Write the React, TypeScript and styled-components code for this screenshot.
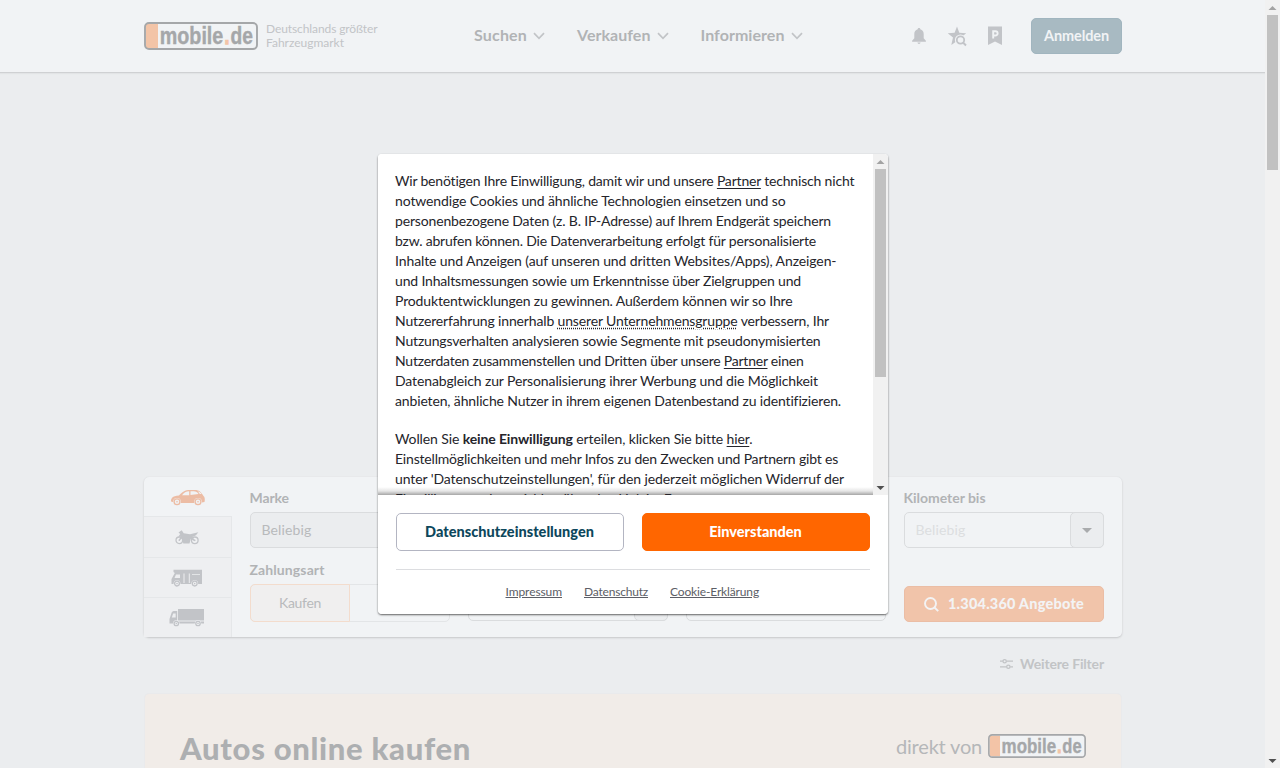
import React, { useLayoutEffect, useRef, useState } from "react";
import styled, { createGlobalStyle } from "styled-components";

const Global = createGlobalStyle`
  * { box-sizing: border-box; }
  html, body, #root { height: 100%; }
  body { margin: 0; overflow: hidden; background: #ebedef; font-family: Lato, "Open Sans", sans-serif; color: #acaeb1; }
  a { color: inherit; text-underline-offset: 2px; }
`;

const Measured = styled.span`
  display: inline-block;
  flex: none;
  white-space: nowrap;
`;

/* Tracks its text so that the line takes exactly the given measure. */
function Fit({ w, children }: { w: number; children: React.ReactNode }) {
  const ref = useRef<HTMLSpanElement>(null);
  const [spacing, setSpacing] = useState(0);
  useLayoutEffect(() => {
    const el = ref.current;
    if (!el) return;
    el.style.letterSpacing = "0px";
    const natural = el.getBoundingClientRect().width;
    const next = (w - natural) / (el.textContent || " ").length;
    el.style.letterSpacing = `${next}px`;
    setSpacing(next);
  }, [w]);
  return <Measured ref={ref} style={{ letterSpacing: `${spacing}px` }}>{children}</Measured>;
}

const Window = styled.div`
  display: flex;
  width: 1280px;
  height: 768px;
  overflow: hidden;
`;
const Page = styled.div`
  width: 1265px;
  height: 768px;
  overflow: hidden;
`;
const Header = styled.header`
  height: 73px;
  background: #f1f3f5;
  border-bottom: 1px solid #cfd1d3;
  box-shadow: 0 1px 1px #e2e4e6;
`;
const HeaderInner = styled.div`
  display: flex;
  align-items: center;
  width: 978px;
  height: 72px;
  margin-left: 144px;
`;
const Tagline = styled.div`
  width: 112px;
  margin-left: 8px;
  font-size: 12px;
  line-height: 14px;
  color: #c2c4c7;
`;
const Nav = styled.nav`
  display: flex;
  gap: 32px;
  width: 330px;
  margin-left: 96px;
  padding-bottom: 3px;
  font-size: 16px;
  font-weight: 700;
  color: #b1b3b5;
`;
const NavItem = styled.div`
  display: flex;
  align-items: center;
  gap: 6px;
  svg { margin-top: 3px; }
`;
const HeaderIcons = styled.div`
  display: flex;
  align-items: center;
  gap: 14px;
  margin-left: 103px;
`;
const Login = styled.button`
  display: flex;
  align-items: center;
  justify-content: center;
  width: 91px;
  height: 36px;
  margin-left: auto;
  padding: 0 0 2px;
  border: 1px solid #a1b5bf;
  border-radius: 5px;
  background: #a8bac2;
  color: #f1f3f5;
  font: 700 14.5px Lato, sans-serif;
`;
const Main = styled.main`
  width: 978px;
  margin: 404px 0 0 144px;
`;
const SearchPanel = styled.section`
  display: flex;
  height: 160px;
  border-radius: 5px;
  background: #f1f3f5;
  box-shadow: 0 1px 2px #c6c8ca, 0 0 1px #d9dbdd;
`;
const Tabs = styled.div`
  width: 88px;
  display: grid;
  grid-template-rows: 39px 41px 40px 40px;
`;
const Tab = styled.div<{ $active?: boolean }>`
  display: flex;
  align-items: center;
  justify-content: center;
  padding-right: ${(p) => (p.$active ? "0" : "2px")};
  color: ${(p) => (p.$active ? "#ecbca4" : "#c2c4c8")};
  background: ${(p) => (p.$active ? "transparent" : "#eeeff1")};
  border-top: ${(p) => (p.$active ? "0" : "1px solid #e5e7e9")};
  border-right: ${(p) => (p.$active ? "0" : "1px solid #e5e7e9")};
`;
const Form = styled.div`
  display: grid;
  grid-template-columns: repeat(4, 200px);
  grid-template-rows: 72px 74px;
  column-gap: 18px;
  padding: 12px 18px;
`;
const Cell = styled.div`
  display: flex;
  flex-direction: column;
`;
const Label = styled.label<{ $tall?: boolean }>`
  height: ${(p) => (p.$tall ? 24 : 23)}px;
  margin-left: -0.5px;
  line-height: 18px;
  font-size: 14px;
  font-weight: 700;
  color: #b1b3b5;
`;
const Field = styled.div<{ $filled?: boolean }>`
  display: flex;
  align-items: center;
  justify-content: space-between;
  height: 36px;
  padding: 0 0 1px 10.5px;
  border: 1px solid #dadcde;
  border-radius: 5px;
  font-size: 14px;
  color: ${(p) => (p.$filled ? "#b8babc" : "#dcdee0")};
  background: ${(p) => (p.$filled ? "#ebedef" : "#f1f3f5")};
`;
const DropButton = styled.div`
  display: flex;
  align-items: center;
  justify-content: center;
  width: 34px;
  height: 36px;
  margin: 0 -1px -1px 0;
  border: 1px solid #dadcde;
  border-radius: 5px;
  background: #ebedef;
`;
const Caret = styled.i`
  border: 5px solid transparent;
  border-top-color: #a9abad;
  border-bottom: 0;
`;
const Segments = styled.div`
  display: flex;
  height: 38px;
  border: 1px solid #e3e5e7;
  border-radius: 5px;
`;
const Segment = styled.div`
  display: flex;
  align-items: center;
  justify-content: center;
  width: 100px;
  margin: -1px;
  padding-bottom: 2px;
  border: 1px solid #f3dccd;
  border-radius: 5px 0 0 5px;
  background: #f0efef;
  font-size: 14px;
  color: #b8babc;
`;
const Submit = styled.button`
  display: flex;
  align-items: center;
  gap: 9px;
  height: 36px;
  margin-top: 25px;
  padding: 0 0 0 19px;
  border: 1px solid #ebbda5;
  border-radius: 5px;
  background: #f1c4aa;
  color: #f3f3f4;
  font: 900 14.5px Lato, sans-serif;
  span { padding-bottom: 1px; }
`;
const MoreFilters = styled.div`
  display: flex;
  align-items: center;
  justify-content: flex-end;
  gap: 7px;
  height: 18px;
  margin: 18px 18px 0 0;
  font-size: 14px;
  font-weight: 700;
  color: #c2c4c6;
  span { padding-bottom: 1px; }
`;
const Promo = styled.section`
  display: flex;
  justify-content: space-between;
  height: 110px;
  margin-top: 20px;
  padding: 36px 36px 0;
  border: 1px solid #e9eaec;
  border-radius: 5px 5px 0 0;
  background: #f1ece8;
`;
const PromoTitle = styled.h1`
  margin: 0 0 0 -1px;
  font-size: 31px;
  line-height: 36px;
  font-weight: 900;
  color: #adafb1;
`;
const PromoBrand = styled.div`
  display: flex;
  align-items: center;
  gap: 6px;
  height: 32px;
  margin-right: -1px;
  font-size: 20px;
  color: #b5b7b9;
`;
const Scrollbar = styled.div<{ $h: number }>`
  display: flex;
  flex-direction: column;
  align-items: center;
  flex: none;
  width: 15px;
  height: ${(p) => p.$h}px;
  background: #f1f1f1;
`;
const Thumb = styled.div<{ $h: number }>`
  width: 11px;
  height: ${(p) => p.$h}px;
  margin-bottom: auto;
  background: #c1c1c1;
`;
const ArrowBox = styled.svg`
  display: block;
  width: 15px;
  height: 15px;
`;
const Modal = styled.div`
  position: absolute;
  left: 378px;
  top: 154px;
  width: 510px;
  height: 460px;
  overflow: hidden;
  border-radius: 4px;
  background: #fff;
  color: #2b2b30;
`;
const ModalShadow = styled.div`
  position: absolute;
  left: 378px;
  top: 154px;
  width: 510px;
  height: 460px;
  border-radius: 4px;
  box-shadow: 0 1px 2px rgba(0, 0, 0, 0.6);
`;
const Scroller = styled.div`
  position: relative;
  display: flex;
  height: 341px;
`;
const Copy = styled.div`
  flex: 1;
  height: 341px;
  overflow: hidden;
  padding: 17px 0 0 17px;
  font-size: 14px;
  line-height: 20px;
  color: #25252b;
  background: linear-gradient(#fff 333px, #e6e6e6 337px, #a6a6a6 341px);
`;
const Paragraph = styled.p`
  display: flex;
  flex-direction: column;
  margin: 0 0 18px;
`;
const Dotted = styled.span`
  text-decoration: underline dotted;
  text-underline-offset: 2px;
`;
const Actions = styled.div`
  display: grid;
  grid-template-columns: 228px 228px;
  gap: 18px;
  margin: 18px 18px 0;
  height: 57px;
  border-bottom: 1px solid #dcdde0;
`;
const Action = styled.button<{ $primary?: boolean }>`
  display: flex;
  align-items: center;
  justify-content: center;
  height: 38px;
  padding: 0 1px 2px 0;
  border: 1px solid ${(p) => (p.$primary ? "#ff6600" : "#b3b5c2")};
  border-radius: 5px;
  background: ${(p) => (p.$primary ? "#ff6600" : "#fff")};
  color: ${(p) => (p.$primary ? "#fff" : "#0d475c")};
  font: 900 14.5px Lato, sans-serif;
`;
const Legal = styled.div`
  display: flex;
  gap: 22px;
  padding: 13px 0 0 127.5px;
  font-size: 12px;
  line-height: 18px;
  color: #5c5e66;
  a { text-decoration: none; }
  span { text-decoration: underline; text-underline-offset: 1px; }
`;

const Arrow = ({ up, color }: { up?: boolean; color: string }) => (
  <ArrowBox viewBox="0 0 15 15">
    <path d={up ? "M3.500 10h8L7.500 6z" : "M3.500 6h8L7.500 10z"} fill={color} />
  </ArrowBox>
);

const LogoText = styled.text`
  font-family: "Liberation Sans Narrow", "Liberation Sans", sans-serif;
  font-weight: 700;
  font-size: 23px;
`;
const Logo = ({ w, h }: { w: number; h: number }) => (
  <svg width={w} height={h} viewBox="0 0 114 28" preserveAspectRatio="none">
    <rect x="1" y="1" width="112" height="26" rx="4" fill="#f1f3f5" />
    <path d="M2 2h12v24H2z" fill="#f3c4a7" />
    <rect x="1" y="1" width="112" height="26" rx="4" fill="none" stroke="#a5a7a9" strokeWidth="1.900" />
    <LogoText x="15.800" y="22" textLength="63.500" lengthAdjust="spacingAndGlyphs" fill="#a5a7a9" stroke="#a5a7a9" strokeWidth=".4">mobile</LogoText>
    <LogoText x="80.600" y="22" textLength="4.800" lengthAdjust="spacingAndGlyphs" fill="#f3c4a7" stroke="#f3c4a7" strokeWidth="1.400">.</LogoText>
    <LogoText x="86.500" y="22" textLength="22.400" lengthAdjust="spacingAndGlyphs" fill="#a5a7a9" stroke="#a5a7a9" strokeWidth=".4">de</LogoText>
  </svg>
);

const Chevron = () => (
  <svg width="12" height="8" viewBox="0 0 12 8" fill="none" stroke="#c2c4c7" strokeWidth="1.700">
    <path d="M1 1.200 6 6.300 11 1.200" />
  </svg>
);

const Bell = () => (
  <svg width="24" height="20" viewBox="-2 0 24 20" fill="#c2c4c8">
    <path d="M10 2c.8 0 1.300.5 1.300 1.200 2.200.6 3.400 2.400 3.400 4.800v4.300l2.200 2.500v.9H3.100v-.9l2.200-2.500V8c0-2.400 1.200-4.200 3.400-4.800C8.700 2.500 9.200 2 10 2zM8.400 16.600h3.200c-.2.900-.8 1.300-1.600 1.300s-1.400-.4-1.600-1.300z" />
  </svg>
);
const StarSearch = () => (
  <svg width="24" height="24" viewBox="0 0 24 24">
    <path d="m12 2.500 2.300 6.300 6.900.4-5.200 4.400 1.600 6.700L12 17l-5.700 3.900 1.700-7.300-5.300-4.400 6.900-.4z" fill="#c2c4c8" />
    <circle cx="15.500" cy="16" r="5.600" fill="#f1f3f5" />
    <circle cx="15.500" cy="16" r="3.700" fill="none" stroke="#c2c4c8" strokeWidth="1.800" />
    <path d="m18 18.500 3 3" stroke="#c2c4c8" strokeWidth="1.900" />
  </svg>
);
const Parking = () => (
  <svg width="24" height="24" viewBox="0 0 24 24">
    <path d="M5 2.500h14V21l-7-3.500L5 21z" fill="#c2c4c8" />
    <path d="M10.200 14.500V7.300h2.300a2 2 0 0 1 0 4.200h-2.300" fill="none" stroke="#f1f3f5" strokeWidth="1.900" />
  </svg>
);

const wheel = (x: number, y: number, r = 2.6) => (
  <g key={x}>
    <circle cx={x} cy={y} r={r + 1} fill="#f0f1f3" />
    <circle cx={x} cy={y} r={r} fill="none" stroke="currentColor" strokeWidth="1.300" />
    <circle cx={x} cy={y} r=".8" fill="currentColor" />
  </g>
);
const Car = () => (
  <svg width="36" height="18" viewBox="0 0 36 18">
    <path d="M1 13.500c0-3 1-5.500 8-6C12 4 15 2 20 2h5c4 0 6 2 8.500 6 1.500 1 1.500 4 1 6L29 15H7z" fill="currentColor" />
    <path d="M12 7.300c2-2.600 4-3.800 7.200-4v4zM20.500 3.300h3.300c2.300 0 3.600 1 4.700 2.800l-8 1zM29.800 6l-2-2.800c1.700.5 2.800 1.400 3.700 2.700z" fill="#f1f3f5" />
    {[7, 28].map((x) => wheel(x, 13.8, 2.9))}
  </svg>
);
const Bike = () => (
  <svg width="24" height="15" viewBox="0 0 24 15">
    {[4.3, 19.8].map((x) => wheel(x, 10.3, 3.3))}
    <path d="M3.500 2.500 6.700.3l2 2.900 6.300 1 8.300-1.900-2.300 3-3.700 1.600 3 3.600-1 .8-3.500-2.500-1.300 4.700H8.300L7 8.200l-2.500 2.600-1-.8 2.300-3.300-2.500 0L5.200 4z" fill="currentColor" />
  </svg>
);
const Camper = () => (
  <svg width="31" height="18" viewBox="0 0 31 18">
    <path d="M2.500.700H31V15H.5V10L3.800 4 2.500 3z" fill="currentColor" />
    <path d="M5 5.500h4V9H3.500zM12.500 4.500h1V14h-1zM17.800 4.500h1V14h-1zM21 5h8v.8h-8z" fill="#edeef0" />
    {[6, 23.7].map((x) => wheel(x, 14.6, 2.4))}
  </svg>
);
const Truck = () => (
  <svg width="35" height="18" viewBox="0 0 35 18">
    <path d="M9 0h26v11.500H9z" fill="currentColor" />
    <path d="M8.200 2v10.500H35V14.500H.5V10l2-6c.5-1.400 1.300-2 3.500-2z" fill="currentColor" />
    <path d="M4.200 4.500h2.500v4H2.800z" fill="#edeef0" />
    {[7.3, 29].map((x) => wheel(x, 14.5, 2.2))}
  </svg>
);

const NAV: [string, number][] = [["Suchen", 53], ["Verkaufen", 73.5], ["Informieren", 84]];
const TABS = [Car, Bike, Camper, Truck];

const CONSENT: [React.ReactNode, number][] = [
  [<>Wir benötigen Ihre Einwilligung, damit wir und unsere <a href="#partner">Partner</a> technisch nicht</>, 459.5],
  ["notwendige Cookies und ähnliche Technologien einsetzen und so", 390.5],
  ["personenbezogene Daten (z. B. IP-Adresse) auf Ihrem Endgerät speichern", 436],
  ["bzw. abrufen können. Die Datenverarbeitung erfolgt für personalisierte", 421],
  ["Inhalte und Anzeigen (auf unseren und dritten Websites/Apps), Anzeigen-", 441],
  ["und Inhaltsmessungen sowie um Erkenntnisse über Zielgruppen und", 406],
  ["Produktentwicklungen zu gewinnen. Außerdem können wir so Ihre", 397.5],
  [<>Nutzererfahrung innerhalb <Dotted>unserer Unternehmensgruppe</Dotted> verbessern, Ihr</>, 434],
  ["Nutzungsverhalten analysieren sowie Segmente mit pseudonymisierten", 425.5],
  [<>Nutzerdaten zusammenstellen und Dritten über unsere <a href="#partner">Partner</a> einen</>, 408],
  ["Datenabgleich zur Personalisierung ihrer Werbung und die Möglichkeit", 423],
  ["anbieten, ähnliche Nutzer in ihrem eigenen Datenbestand zu identifizieren.", 446],
];
const DECLINE: [React.ReactNode, number][] = [
  [<>Wollen Sie <b>keine Einwilligung</b> erteilen, klicken Sie bitte <a href="#hier">hier</a>.</>, 357],
  ["Einstellmöglichkeiten und mehr Infos zu den Zwecken und Partnern gibt es", 443],
  ["unter 'Datenschutzeinstellungen', für den jederzeit möglichen Widerruf der", 449],
  ["Einwilligung auch erreichbar über den Link im Footer.", 310],
];
const LEGAL: [string, number][] = [["Impressum", 56.5], ["Datenschutz", 64], ["Cookie-Erklärung", 89]];

export default function App() {
  return (
    <Window>
      <Global />
      <Page>
        <Header>
          <HeaderInner>
            <Logo w={114} h={28} />
            <Tagline><Fit w={111.5}>Deutschlands größter</Fit><Fit w={78}>Fahrzeugmarkt</Fit></Tagline>
            <Nav>
              {NAV.map(([text, w]) => (
                <NavItem key={text}><Fit w={w}>{text}</Fit><Chevron /></NavItem>
              ))}
            </Nav>
            <HeaderIcons><Bell /><StarSearch /><Parking /></HeaderIcons>
            <Login><Fit w={65}>Anmelden</Fit></Login>
          </HeaderInner>
        </Header>
        <Main>
          <SearchPanel>
            <Tabs>
              {TABS.map((Icon, i) => <Tab key={i} $active={i === 0}><Icon /></Tab>)}
            </Tabs>
            <Form>
              <Cell><Label><Fit w={39.5}>Marke</Fit></Label><Field $filled><Fit w={50}>Beliebig</Fit></Field></Cell>
              <Cell />
              <Cell />
              <Cell>
                <Label><Fit w={82}>Kilometer bis</Fit></Label>
                <Field><Fit w={50}>Beliebig</Fit><DropButton><Caret /></DropButton></Field>
              </Cell>
              <Cell>
                <Label><Fit w={75}>Zahlungsart</Fit></Label>
                <Segments><Segment><Fit w={42}>Kaufen</Fit></Segment></Segments>
              </Cell>
              <Cell><Label $tall /><Field><span /><DropButton /></Field></Cell>
              <Cell><Label $tall /><Field /></Cell>
              <Cell>
                <Submit>
                  <svg width="15" height="16" viewBox="0 0 15 16" fill="none" stroke="currentColor" strokeWidth="1.900">
                    <circle cx="6.500" cy="7.500" r="5.500" /><path d="m10.500 11.500 3.700 3.700" />
                  </svg>
                  <Fit w={136}>1.304.360 Angebote</Fit>
                </Submit>
              </Cell>
            </Form>
          </SearchPanel>
          <MoreFilters>
            <svg width="13" height="12" viewBox="0 0 14 12" fill="none" stroke="currentColor" strokeWidth="1.400">
              <path d="M0 3h3M7 3h7M0 9h7M11 9h3" /><circle cx="5" cy="3" r="1.800" /><circle cx="9" cy="9" r="1.800" />
            </svg>
            <Fit w={84}>Weitere Filter</Fit>
          </MoreFilters>
          <Promo>
            <PromoTitle><Fit w={291}>Autos online kaufen</Fit></PromoTitle>
            <PromoBrand><Fit w={86}>direkt von</Fit><Logo w={98} h={24} /></PromoBrand>
          </Promo>
        </Main>
      </Page>
      <Scrollbar $h={768}><Arrow up color="#a3a3a3" /><Thumb $h={155} /><Arrow color="#505050" /></Scrollbar>
      <ModalShadow />
      <Modal>
        <Scroller>
          <Copy>
            {[CONSENT, DECLINE].map((lines, p) => (
              <Paragraph key={p}>
                {lines.map(([text, w], i) => <span key={i}><Fit w={w}>{text}</Fit></span>)}
              </Paragraph>
            ))}
          </Copy>
          <Scrollbar $h={341}><Arrow up color="#a3a3a3" /><Thumb $h={208} /><Arrow color="#505050" /></Scrollbar>
        </Scroller>
        <Actions>
          <Action><Fit w={169}>Datenschutzeinstellungen</Fit></Action>
          <Action $primary><Fit w={92.5}>Einverstanden</Fit></Action>
        </Actions>
        <Legal>
          {LEGAL.map(([text, w]) => <a key={text} href={`#${text}`}><Fit w={w}>{text}</Fit></a>)}
        </Legal>
      </Modal>
    </Window>
  );
}
